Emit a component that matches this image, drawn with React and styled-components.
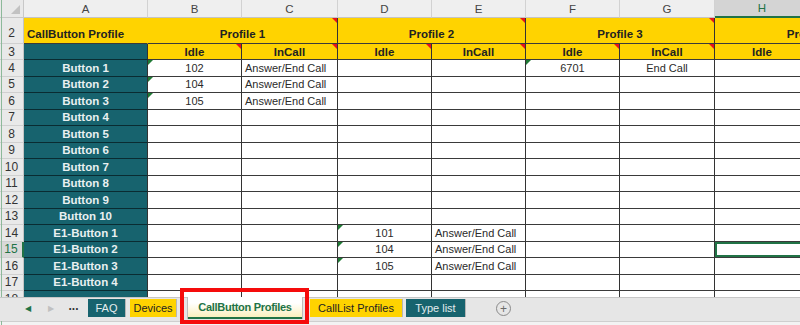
import React from "react";
import styled, { createGlobalStyle } from "styled-components";

const Global = createGlobalStyle`
  html, body { margin: 0; padding: 0; background: #fff; }
  body { font-family: "Liberation Sans", Arial, sans-serif; }
`;

const TEAL = "#17636e";
const YELLOW = "#ffd300";
const GREEN = "#217346";

const Frame = styled.div`
  width: 800px; height: 325px; overflow: hidden; position: relative;
  display: flex; flex-direction: column;
  &::after {
    content: ""; position: absolute; left: 1px; top: 0; bottom: 0; width: 1px; background: #8db99a;
  }
`;

const Sheet = styled.div`height: 297px; overflow: hidden; flex: none;`;

const Grid = styled.div`
  display: grid;
  grid-template-columns: 24px 124px 94px 96px 94px 94px 94px 95px 95px 95px 95px;
  grid-template-rows: 18px 26px 16px repeat(15, 16.5px);
  width: max-content;
  font-size: 11px;
`;

const Corner = styled.div`
  background: #e9e9e9; position: relative;
  border-right: 1px solid #c8c8c8; border-bottom: 1px solid #c8c8c8;
  &::after {
    content: ""; position: absolute; right: 3px; bottom: 3px;
    border-left: 9px solid transparent; border-bottom: 9px solid #c2c2c2;
  }
`;

const ColHead = styled.div`
  display: flex; align-items: center; justify-content: center;
  background: ${({ $sel }) => ($sel ? "#d4d4d4" : "#efefef")};
  color: ${({ $sel }) => ($sel ? GREEN : "#444")};
  font-size: 11.5px;
  border-right: 1px solid #d2d2d2;
  border-bottom: ${({ $sel }) => ($sel ? `2px solid ${GREEN}` : "1px solid #c4c4c4")};
`;

const RowHead = styled.div`
  display: flex; align-items: center; justify-content: center;
  background: ${({ $sel }) => ($sel ? "#d9d9d9" : "#e9e9e9")};
  color: ${({ $sel }) => ($sel ? GREEN : "#333")};
  font-size: 12px;
  border-right: ${({ $sel }) => ($sel ? `2px solid ${GREEN}` : "1px solid #c4c4c4")};
  border-bottom: 1px solid #d0d0d0;
  ${({ $tall }) => ($tall ? "align-items: flex-end; padding-bottom: 3px;" : "")}
`;

const tones = {
  teal: { bg: TEAL, fg: "#e9f0f1", line: "#0a2c32" },
  yellow: { bg: YELLOW, fg: "#222", line: "#3a3a3a" },
  white: { bg: "#fff", fg: "#2a2a2a", line: "#3a3a3a" },
};

const Cell = styled.div`
  position: relative;
  display: flex; overflow: visible; white-space: nowrap;
  padding: 0 3px;
  grid-column: span ${({ $span }) => $span || 1};
  align-items: ${({ $valign }) => ($valign === "bottom" ? "flex-end" : "center")};
  padding-bottom: ${({ $valign }) => ($valign === "bottom" ? "3px" : "0")};
  justify-content: ${({ $align }) =>
    $align === "left" ? "flex-start" : $align === "right" ? "flex-end" : "center"};
  background: ${({ $tone }) => tones[$tone].bg};
  color: ${({ $tone }) => tones[$tone].fg};
  font-weight: ${({ $bold }) => ($bold ? 700 : 400)};
  font-size: ${({ $bold }) => ($bold ? "11.5px" : "11px")};
  border-bottom: 1px solid ${({ $tone }) => tones[$tone].line};
  border-right: 1px solid ${({ $tone, $open }) => ($open ? tones[$tone].bg : "#333")};
  box-sizing: border-box;
  ${({ $sel }) => ($sel ? `box-shadow: inset 0 0 0 2px ${GREEN};` : "")}
`;

const Note = styled.span`
  position: absolute; top: 0; right: 0;
  border-top: 5px solid #e8141c; border-left: 5px solid transparent;
`;

const Flag = styled.span`
  position: absolute; top: 0; left: 0;
  border-top: 5px solid #1f7a35; border-right: 5px solid transparent;
`;

const TabBar = styled.div`
  height: 23px; flex: none; background: #e6e6e6;
  border-top: 1px solid #c6c6c6;
  display: flex; align-items: flex-start; padding-left: 16px;
  font-size: 11px; position: relative; z-index: 2;
`;

const StatusBar = styled.div`flex: 1; background: #f3f3f3; border-top: 1px solid #cfcfcf;`;

const NavBtn = styled.div`
  width: 23px; height: 20px; display: flex; align-items: center; justify-content: center;
  color: ${({ $off }) => ($off ? "#c0c0c0" : GREEN)}; font-size: 8px;
`;

const Dots = styled(NavBtn)`font-size: 12px; font-weight: 700; color: #333; padding-bottom: 4px; box-sizing: border-box;`;

const Tab = styled.div`
  margin-top: 1px; margin-left: ${({ $ml }) => $ml}px;
  width: ${({ $w }) => $w}px; height: 18px;
  display: flex; align-items: center; justify-content: center;
  background: ${({ $teal }) => ($teal ? TEAL : YELLOW)};
  color: ${({ $teal }) => ($teal ? "#e4ecee" : "#222")};
  font-size: 11px;
  border-right: 1px solid #b5b5b5;
`;

const ActiveTab = styled.div`
  position: relative; margin-left: ${({ $ml }) => $ml}px;
  width: ${({ $w }) => $w}px; height: 20px; margin-top: -1px;
  display: flex; align-items: center; justify-content: center;
  background: linear-gradient(#ffffff 30%, #fbf0bd);
  color: ${GREEN}; font-weight: 700; font-size: 11px; letter-spacing: -0.3px;
  border-bottom: 2px solid ${GREEN};
  box-shadow: 1px 0 0 #bdbdbd, -1px 0 0 #bdbdbd;
`;

const Highlight = styled.span`
  position: absolute; top: -9px; left: -8px; right: -7px; bottom: -7px;
  border: 4px solid #f50c0c; pointer-events: none;
`;

const AddBtn = styled.div`
  margin-left: 30px; margin-top: 3px; width: 13px; height: 13px; border-radius: 50%;
  border: 1px solid #8a8a8a; color: #6a6a6a; font-size: 12px; line-height: 12px;
  display: flex; align-items: center; justify-content: center;
`;

const letters = ["A", "B", "C", "D", "E", "F", "G", "H", "I"];
const dataCols = ["B", "C", "D", "E", "F", "G", "H", "I", "J"];

const labels = [
  "Button 1", "Button 2", "Button 3", "Button 4", "Button 5", "Button 6", "Button 7",
  "Button 8", "Button 9", "Button 10", "E1-Button 1", "E1-Button 2", "E1-Button 3",
  "E1-Button 4", "",
];

const values = {
  4: { B: { v: "102", flag: true }, C: { v: "Answer/End Call", al: "left" }, F: { v: "6701", flag: true }, G: { v: "End Call" } },
  5: { B: { v: "104", flag: true }, C: { v: "Answer/End Call", al: "left" } },
  6: { B: { v: "105", flag: true }, C: { v: "Answer/End Call", al: "left" } },
  14: { D: { v: "101", flag: true }, E: { v: "Answer/End Call", al: "left" } },
  15: { D: { v: "104", flag: true }, E: { v: "Answer/End Call", al: "left" }, H: { sel: true } },
  16: { D: { v: "105", flag: true }, E: { v: "Answer/End Call", al: "left" } },
};

const profiles = [
  { name: "Profile 1", note: true },
  { name: "Profile 2", note: true },
  { name: "Profile 3", note: true },
  { name: "Profile 4", note: false },
];

export default function App() {
  return (
    <Frame>
      <Global />
      <Sheet>
        <Grid>
          <Corner />
          {letters.map((l) => (
            <ColHead key={l} $sel={l === "H"}>{l}</ColHead>
          ))}
          <ColHead />

          <RowHead $tall>2</RowHead>
          <Cell $tone="yellow" $bold $align="left" $valign="bottom" $open>CallButton Profile</Cell>
          {profiles.map((p) => (
            <Cell key={p.name} $tone="yellow" $bold $span={2} $valign="bottom">
              {p.name}
              {p.note && <Note />}
            </Cell>
          ))}
          <Cell $tone="yellow" />

          <RowHead>3</RowHead>
          <Cell $tone="teal" />
          {dataCols.map((c, i) => (
            <Cell key={c} $tone="yellow" $bold>
              {c === "J" ? "" : i % 2 === 0 ? "Idle" : "InCall"}
              {i < 6 && <Note />}
            </Cell>
          ))}

          {labels.map((label, idx) => {
            const n = idx + 4;
            const row = values[n] || {};
            return (
              <React.Fragment key={n}>
                <RowHead $sel={n === 15}>{n}</RowHead>
                <Cell $tone="teal" $bold>{label}</Cell>
                {dataCols.map((c) => {
                  const d = row[c] || {};
                  return (
                    <Cell key={c} $tone="white" $align={d.al} $sel={d.sel}>
                      {d.v}
                      {d.flag && <Flag />}
                    </Cell>
                  );
                })}
              </React.Fragment>
            );
          })}
        </Grid>
      </Sheet>

      <TabBar>
        <NavBtn>◀</NavBtn>
        <NavBtn $off>▶</NavBtn>
        <Dots>...</Dots>
        <Tab $teal $ml={3} $w={37}>FAQ</Tab>
        <Tab $ml={4} $w={46}>Devices</Tab>
        <ActiveTab $ml={11} $w={114}>
          CallButton Profiles
          <Highlight />
        </ActiveTab>
        <Tab $ml={8} $w={92}>CallList Profiles</Tab>
        <Tab $teal $ml={3} $w={59}>Type list</Tab>
        <AddBtn>+</AddBtn>
      </TabBar>
      <StatusBar />
    </Frame>
  );
}
